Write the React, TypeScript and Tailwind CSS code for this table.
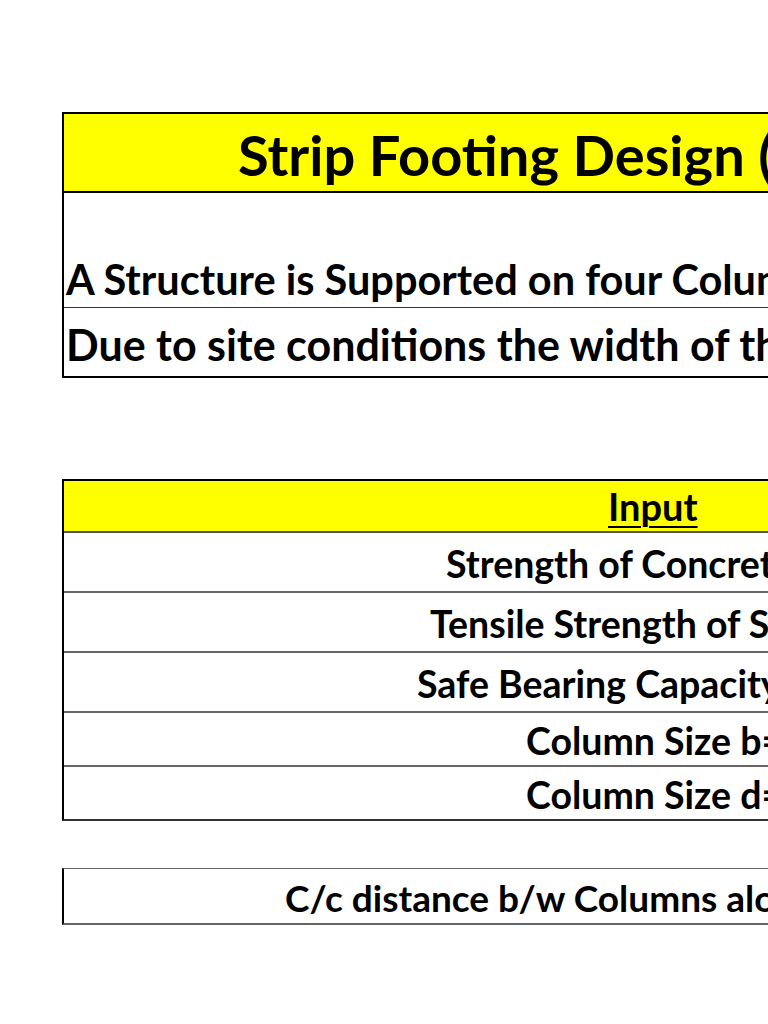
import React from 'react';

const font = { fontFamily: 'Lato, "Open Sans", sans-serif' };

function App() {
  const inputRows = [
    { label: "Strength of Concrete f'c =", pad: 'pl-[382px]', h: 'h-[60px]' },
    { label: 'Tensile Strength of Steel fy =', pad: 'pl-[366px]', h: 'h-[60px]' },
    { label: 'Safe Bearing Capacity of Soil qa =', pad: 'pl-[353px]', h: 'h-[60px]' },
    { label: 'Column Size b=', pad: 'pl-[462px]', h: 'h-[54px]' },
    { label: 'Column Size d=', pad: 'pl-[462px]', h: 'h-[52px]' },
  ];

  return (
    <div className="w-[768px] h-[1024px] overflow-hidden bg-white text-black font-bold" style={font}>
      <div className="pt-[112px] pl-[62px]">
        {/* Problem statement */}
        <div className="w-[1400px] border-2 border-black">
          <div className="h-[79px] bg-[#ffff00] border-b-2 border-black pl-[174px] flex items-center">
            <span className="text-[56px] leading-none whitespace-nowrap pt-[4px]">Strip Footing Design (Combined)</span>
          </div>
          <div className="h-[115px] border-b border-[#333] flex items-end pl-[2px] pb-[7px]">
            <span className="text-[41.5px] leading-none whitespace-nowrap">A Structure is Supported on four Columns as shown below.</span>
          </div>
          <div className="h-[68px] flex items-center pl-[2px]">
            <span className="text-[43px] leading-none whitespace-nowrap pt-[4px]">Due to site conditions the width of the footing is restricted.</span>
          </div>
        </div>

        {/* Input table */}
        <div className="mt-[101px] w-[1400px] border-2 border-black border-b-[#333]">
          <div className="h-[52px] bg-[#ffff00] border-b-2 border-[#555] pl-[544px] flex items-center">
            <span className="text-[38px] leading-none underline underline-offset-[5px] decoration-2">Input</span>
          </div>
          {inputRows.map((r, i) => (
            <div
              key={i}
              className={`${r.h} ${r.pad} flex items-center ${i < inputRows.length - 1 ? 'border-b-2 border-[#666]' : ''}`}
            >
              <span className="text-[37.5px] leading-none whitespace-nowrap pt-[3px]">{r.label}</span>
            </div>
          ))}
        </div>

        {/* Spacing */}
        <div className="mt-[47px] w-[1400px] h-[57px] border border-[#666] border-l-2 border-l-black border-b-2 pl-[221px] flex items-center">
          <span className="text-[37px] leading-none whitespace-nowrap pt-[3px]">C/c distance b/w Columns along length =</span>
        </div>
      </div>
    </div>
  );
}

export default App;
